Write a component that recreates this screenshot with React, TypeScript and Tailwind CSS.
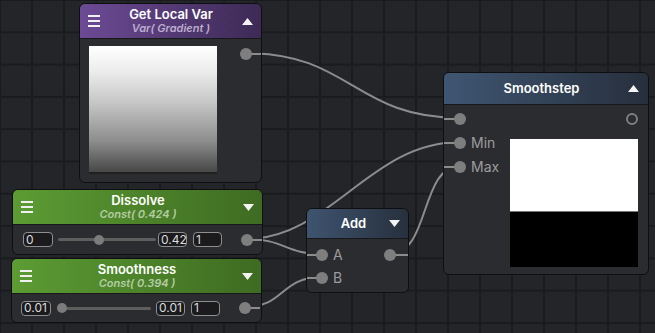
import React from "react";

type Wire = { d: string };

const wires: Wire[] = [
  { d: "M246,53 C350,53 355,118 460,118" },
  { d: "M246,239 C330,239 370,142 460,142" },
  { d: "M246,239 C285,239 285,254 322,254" },
  { d: "M245,307 C285,307 280,277 322,277" },
  { d: "M390,254 C430,254 420,166 460,166" },
];

const Burger = () => (
  <div className="flex w-[12px] shrink-0 flex-col gap-[3px]">
    <span className="h-[2px] bg-[#f0f0f0]" />
    <span className="h-[2px] bg-[#f0f0f0]" />
    <span className="h-[2px] bg-[#f0f0f0]" />
  </div>
);

const Caret = ({ up }: { up?: boolean }) => (
  <svg width="11" height="7" viewBox="0 0 11 7" className="shrink-0">
    <path d={up ? "M0 7 L5.5 0 L11 7 Z" : "M0 0 L11 0 L5.5 7 Z"} fill="#f4f4f4" />
  </svg>
);

// port dot, with the short bit of wire that sits on top of the node body
const Port = ({ stub, ring }: { stub?: string; ring?: boolean }) => (
  <span className="relative flex h-[12px] w-[12px] shrink-0">
    {stub && <span className={`absolute top-[5px] h-[2px] bg-[#8c8c8c] ${stub}`} />}
    <span
      className={
        ring
          ? "relative h-[12px] w-[12px] rounded-full border-2 border-[#7e7e7e]"
          : "relative h-[12px] w-[12px] rounded-full bg-[#7e7e7e]"
      }
    />
  </span>
);

const Field = ({ value, w }: { value: string; w: string }) => (
  <div
    className={`flex h-[15px] shrink-0 items-center rounded-[4px] border border-[#8f8f8f] bg-[#1b1b1d] pl-[2px] text-[12px] leading-none text-[#dcdcdc] ${w}`}
  >
    {value}
  </div>
);

const ValueHeader = ({
  title,
  sub,
  bg,
  subColor,
  up,
}: {
  title: string;
  sub: string;
  bg: string;
  subColor: string;
  up?: boolean;
}) => (
  <div className={`flex h-[35px] shrink-0 items-center border-b border-[#18181a] px-[8px] ${bg}`}>
    <Burger />
    <div className="flex flex-1 flex-col items-center">
      <span className="text-[13px] font-semibold leading-[15px] text-white">{title}</span>
      <span className={`text-[11px] font-semibold italic leading-[13px] ${subColor}`}>{sub}</span>
    </div>
    <Caret up={up} />
  </div>
);

export default function App() {
  return (
    <div className="relative h-[333px] w-[655px] overflow-hidden bg-[#242529] bg-[linear-gradient(to_right,#1a1b1e_2px,transparent_2px),linear-gradient(to_bottom,#1a1b1e_2px,transparent_2px)] bg-[size:32px_32.3px] bg-[position:-1px_-1px] font-['Inter',sans-serif]">
      <svg className="absolute inset-0" width="655" height="333">
        {wires.map((w, i) => (
          <path key={i} d={w.d} fill="none" stroke="#8c8c8c" strokeWidth="2" />
        ))}
      </svg>

      {/* Get Local Var */}
      <div className="absolute left-[79px] top-[3px] flex h-[180px] w-[183px] flex-col overflow-hidden rounded-[6px] border border-[#0f0f11] bg-[#2b2c30]">
        <ValueHeader
          title="Get Local Var"
          sub="Var( Gradient )"
          bg="bg-[linear-gradient(90deg,#6c4a95,#3d2a55)]"
          subColor="text-[#bcadd0]"
          up
        />
        <div className="flex flex-1 items-start pl-[9px] pr-[9px] pt-[7px]">
          <div className="h-[128px] w-[128px] border-b-2 border-[#202020] bg-[linear-gradient(to_bottom,#ffffff_0%,#ececec_20%,#c6c6c6_45%,#8e8e8e_75%,#474747_100%)]" />
          <div className="ml-auto mt-[2px]">
            <Port stub="left-[6px] w-[15px]" />
          </div>
        </div>
      </div>

      {/* Dissolve */}
      <div className="absolute left-[12px] top-[189px] flex h-[66px] w-[251px] flex-col overflow-hidden rounded-[6px] border border-[#0f0f11] bg-[#2b2c30]">
        <ValueHeader
          title="Dissolve"
          sub="Const( 0.424 )"
          bg="bg-[linear-gradient(90deg,#5c9c33,#3e6b22)]"
          subColor="text-[#b4cca3]"
        />
        <div className="flex flex-1 items-center pl-[10px] pr-[9px]">
          <Field value="0" w="w-[30px]" />
          <div className="relative ml-[5px] flex h-[12px] w-[98px] items-center">
            <div className="h-[3px] w-full rounded-full bg-[#5e5e5e]" />
            <span className="absolute left-[36px] top-[1px] h-[10px] w-[10px] rounded-full bg-[#7c7c7c]" />
          </div>
          <Field value="0.42" w="ml-[2px] w-[29px]" />
          <Field value="1" w="ml-[6px] w-[29px]" />
          <div className="ml-auto">
            <Port stub="left-[6px] w-[15px]" />
          </div>
        </div>
      </div>

      {/* Smoothness */}
      <div className="absolute left-[11px] top-[258px] flex h-[65px] w-[251px] flex-col overflow-hidden rounded-[6px] border border-[#0f0f11] bg-[#2b2c30]">
        <ValueHeader
          title="Smoothness"
          sub="Const( 0.394 )"
          bg="bg-[linear-gradient(90deg,#5c9c33,#3e6b22)]"
          subColor="text-[#b4cca3]"
        />
        <div className="flex flex-1 items-center pl-[9px] pr-[10px]">
          <Field value="0.01" w="w-[30px]" />
          <div className="relative ml-[6px] flex h-[12px] w-[94px] items-center">
            <div className="h-[3px] w-full rounded-full bg-[#5e5e5e]" />
            <span className="absolute left-0 top-[1px] h-[10px] w-[10px] rounded-full bg-[#7c7c7c]" />
          </div>
          <Field value="0.01" w="ml-[5px] w-[29px]" />
          <Field value="1" w="ml-[6px] w-[29px]" />
          <div className="ml-auto">
            <Port stub="left-[6px] w-[15px]" />
          </div>
        </div>
      </div>

      {/* Add */}
      <div className="absolute left-[306px] top-[208px] flex h-[85px] w-[103px] flex-col overflow-hidden rounded-[6px] border border-[#0f0f11] bg-[#2b2c30]">
        <div className="grid h-[30px] shrink-0 grid-cols-[1fr_auto_1fr] items-center border-b border-[#18181a] bg-[linear-gradient(90deg,#3e546f,#27303d)] pr-[8px]">
          <span />
          <span className="text-[13px] font-semibold text-white">Add</span>
          <div className="flex justify-end">
            <Caret />
          </div>
        </div>
        <div className="flex flex-1 pl-[9px] pr-[12px] pt-[4px]">
          <div className="flex flex-col">
            <div className="flex h-[23px] items-center gap-[5px]">
              <Port stub="right-[6px] w-[16px]" />
              <span className="text-[14px] leading-none text-[#9c9c9c]">A</span>
            </div>
            <div className="flex h-[23px] items-center gap-[5px]">
              <Port stub="right-[6px] w-[16px]" />
              <span className="text-[14px] leading-none text-[#9c9c9c]">B</span>
            </div>
          </div>
          <div className="ml-auto flex h-[23px] items-center">
            <Port stub="left-[6px] w-[18px]" />
          </div>
        </div>
      </div>

      {/* Smoothstep */}
      <div className="absolute left-[443px] top-[72px] flex h-[203px] w-[206px] flex-col overflow-hidden rounded-[6px] border border-[#0f0f11] bg-[#2b2c30]">
        <div className="grid h-[32px] shrink-0 grid-cols-[1fr_auto_1fr] items-center border-b border-[#18181a] bg-[linear-gradient(90deg,#3f5672,#272f3c)] pr-[9px]">
          <span />
          <span className="text-[13px] font-semibold text-white">Smoothstep</span>
          <div className="flex justify-end">
            <Caret up />
          </div>
        </div>
        <div className="flex flex-1 pl-[10px] pr-[10px] pt-[2px]">
          <div className="flex flex-col">
            <div className="flex h-[24px] items-center">
              <Port stub="right-[6px] w-[17px]" />
            </div>
            <div className="flex h-[24px] items-center gap-[5px]">
              <Port stub="right-[6px] w-[17px]" />
              <span className="text-[14px] leading-none text-[#9c9c9c]">Min</span>
            </div>
            <div className="flex h-[24px] items-center gap-[5px]">
              <Port stub="right-[6px] w-[17px]" />
              <span className="text-[14px] leading-none text-[#9c9c9c]">Max</span>
            </div>
          </div>
          <div className="ml-auto flex flex-col items-end">
            <div className="flex h-[24px] items-center">
              <Port ring />
            </div>
            <div className="mt-[8px] flex h-[128px] w-[128px] flex-col">
              <div className="h-[73px] border-b border-[#777777] bg-white" />
              <div className="flex-1 bg-black" />
            </div>
          </div>
        </div>
      </div>
    </div>
  );
}
